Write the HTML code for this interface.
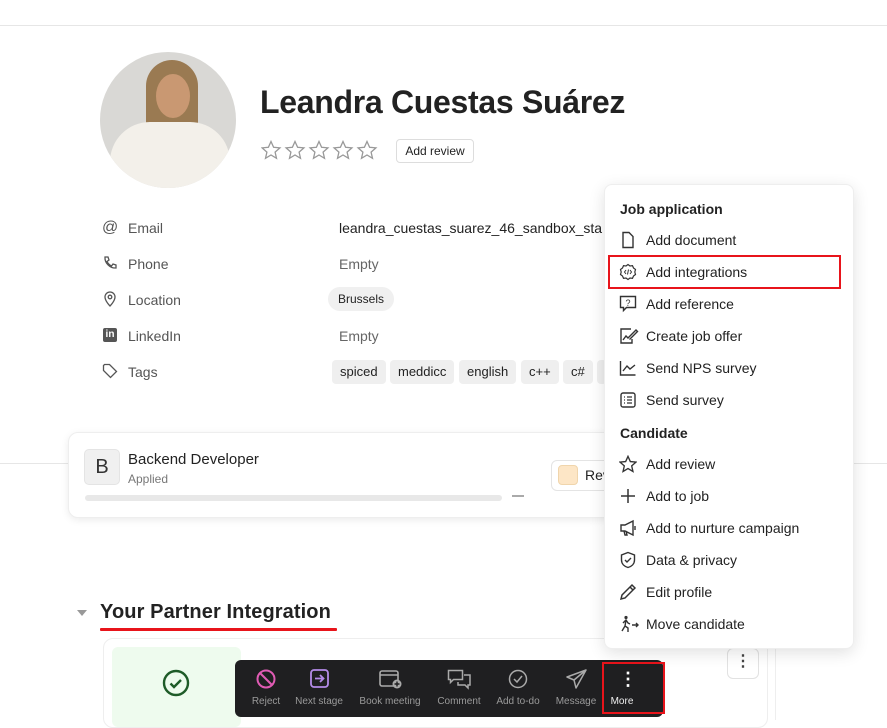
<!DOCTYPE html>
<html><head><meta charset="utf-8"><style>
*{box-sizing:border-box;margin:0;padding:0}
body{width:887px;height:720px;overflow:hidden;background:#fff;font-family:"Liberation Sans",sans-serif;color:#222;position:relative}
.a{position:absolute}
.lbl{position:absolute;left:128px;font-size:14px;color:#555}
.val{position:absolute;left:339px;font-size:14px;color:#666}
.ic{position:absolute;left:102px}
.tag{position:absolute;top:360px;height:24px;background:#efefef;border-radius:4px;font-size:13px;line-height:24px;padding:0 8px;color:#222}
.mi{position:absolute;left:646px;font-size:14px;color:#222}
.mic{position:absolute;left:619px}
.mh{position:absolute;left:620px;font-size:14px;font-weight:bold;color:#222}
.tb{position:absolute;top:696px;font-size:10px;color:#9a9a9a;transform:translateX(-50%);white-space:nowrap}
.ti{position:absolute;top:669px}
</style></head><body>
<div class="a" style="left:0;top:25px;width:887px;height:1px;background:#e6e6e6"></div>
<!-- avatar -->
<div class="a" style="left:100px;top:52px;width:136px;height:136px;border-radius:50%;overflow:hidden;background:#d9d8d5">
 <div class="a" style="left:46px;top:8px;width:52px;height:110px;border-radius:26px 26px 10px 10px;background:#9a7a52"></div>
 <div class="a" style="left:56px;top:22px;width:34px;height:44px;border-radius:50%;background:#c99872"></div>
 <div class="a" style="left:10px;top:70px;width:120px;height:80px;border-radius:40px 40px 0 0;background:#f3f0ea"></div>
</div>
<div class="a" style="left:260px;top:84px;font-size:32px;font-weight:bold;color:#222;letter-spacing:-0.3px">Leandra Cuestas Suárez</div>
<svg class="a" style="left:261px;top:140px" width="120" height="22" viewBox="0 0 120 22">
 <g fill="none" stroke="#999" stroke-width="1.3">
 <path id="s" d="M10 1.5l2.6 5.8 6.3.6-4.8 4.2 1.4 6.2L10 15l-5.5 3.3 1.4-6.2L1.1 7.9l6.3-.6z"/>
 <use href="#s" x="24"/><use href="#s" x="48"/><use href="#s" x="72"/><use href="#s" x="96"/></g></svg>
<div class="a" style="left:396px;top:139px;width:78px;height:24px;border:1px solid #ddd;border-radius:4px;font-size:12px;line-height:22px;text-align:center;color:#222">Add review</div>
<!-- rows -->
<div class="ic" style="top:219px;font-size:16px;color:#555">@</div>
<div class="lbl" style="top:220px">Email</div><div class="val" style="top:220px;color:#222">leandra_cuestas_suarez_46_sandbox_sta</div>
<svg class="ic" style="top:255px" width="16" height="16" viewBox="0 0 16 16"><path d="M3 2l3 0 1 3-2 1.5c1 2 2.5 3.5 4.5 4.5L11 9l3 1v3c-6 .5-11.5-5-11-11z" fill="none" stroke="#555" stroke-width="1.3"/></svg>
<div class="lbl" style="top:256px">Phone</div><div class="val" style="top:256px">Empty</div>
<svg class="ic" style="top:291px" width="16" height="16" viewBox="0 0 16 16"><path d="M8 15s5-5 5-9A5 5 0 0 0 3 6c0 4 5 9 5 9z" fill="none" stroke="#555" stroke-width="1.3"/><circle cx="8" cy="6" r="1.8" fill="none" stroke="#555" stroke-width="1.3"/></svg>
<div class="lbl" style="top:292px">Location</div>
<div class="a" style="left:328px;top:287px;width:66px;height:24px;background:#f0f0f0;border-radius:12px;font-size:12px;line-height:24px;text-align:center;color:#222">Brussels</div>
<div class="ic" style="top:328px;left:103px;width:14px;height:14px;background:#555;border-radius:2px;color:#fff;font-size:10px;font-weight:bold;line-height:14px;text-align:center">in</div>
<div class="lbl" style="top:328px">LinkedIn</div><div class="val" style="top:328px">Empty</div>
<svg class="ic" style="top:363px" width="16" height="16" viewBox="0 0 16 16"><path d="M1.5 2.5v5l7 7 6-6-7-7h-5z" fill="none" stroke="#555" stroke-width="1.3"/></svg>
<div class="lbl" style="top:364px">Tags</div>
<div class="tag" style="left:332px">spiced</div>
<div class="tag" style="left:390px">meddicc</div>
<div class="tag" style="left:459px">english</div>
<div class="tag" style="left:521px">c++</div>
<div class="tag" style="left:563px">c#</div>
<div class="tag" style="left:597px;width:10px;padding:0"></div>
<!-- divider -->
<div class="a" style="left:0;top:463px;width:887px;height:1px;background:#e6e6e6"></div>
<!-- job card -->
<div class="a" style="left:68px;top:432px;width:600px;height:86px;background:#fff;border:1px solid #eee;border-radius:10px;box-shadow:0 2px 8px rgba(0,0,0,.08)"></div>
<div class="a" style="left:84px;top:449px;width:36px;height:36px;background:#f0f0f0;border:1px solid #e4e4e4;border-radius:5px;font-size:20px;line-height:34px;text-align:center;color:#333">B</div>
<div class="a" style="left:128px;top:451px;font-size:15px;color:#222">Backend Developer</div>
<div class="a" style="left:128px;top:472px;font-size:12px;color:#777">Applied</div>
<div class="a" style="left:85px;top:495px;width:417px;height:6px;background:#e8e8e8;border-radius:3px"></div>
<div class="a" style="left:512px;top:495px;width:12px;height:1.5px;background:#aaa"></div>
<div class="a" style="left:551px;top:460px;width:70px;height:31px;border:1px solid #e4e4e4;border-radius:6px;background:#fff"></div>
<div class="a" style="left:558px;top:465px;width:20px;height:20px;background:#fde6c6;border:1px solid #f0d5ac;border-radius:4px"></div>
<div class="a" style="left:585px;top:467px;font-size:14px;color:#222">Rev</div>
<!-- section -->
<div class="a" style="left:77px;top:610px;width:0;height:0;border-left:5px solid transparent;border-right:5px solid transparent;border-top:6px solid #999"></div>
<div class="a" style="left:100px;top:601px;font-size:20px;font-weight:bold;color:#222;letter-spacing:0.1px">Your Partner Integration</div>
<div class="a" style="left:100px;top:628px;width:237px;height:3px;background:#e8141b;border-radius:1px"></div>
<div class="a" style="left:103px;top:638px;width:665px;height:90px;border:1px solid #eee;border-radius:10px;background:#fff"></div>
<div class="a" style="left:112px;top:647px;width:129px;height:80px;background:#eefbee;border-radius:6px"></div>
<svg class="a" style="left:162px;top:669px" width="28" height="28" viewBox="0 0 28 28"><circle cx="14" cy="14" r="12" fill="none" stroke="#1e5b28" stroke-width="2.4"/><path d="M8.5 14.5l3.5 3.5 7-7" fill="none" stroke="#1e5b28" stroke-width="2.4"/></svg>
<div class="a" style="left:727px;top:648px;width:32px;height:31px;border:1px solid #e2e2e2;border-radius:6px;background:#fff;text-align:center;font-size:16px;line-height:26px;color:#444;font-weight:bold">⋮</div>
<div class="a" style="left:775px;top:640px;width:1px;height:80px;background:#eee"></div>
<!-- toolbar -->
<div class="a" style="left:235px;top:660px;width:428px;height:57px;background:#1f1f21;border-radius:6px"></div>
<svg class="ti" style="left:256px" width="20" height="20" viewBox="0 0 20 20"><circle cx="10" cy="10" r="8.5" fill="none" stroke="#e05bb4" stroke-width="2"/><path d="M4 4l12 12" stroke="#e05bb4" stroke-width="2"/></svg>
<div class="tb" style="left:266px">Reject</div>
<svg class="ti" style="left:310px" width="19" height="19" viewBox="0 0 19 19"><rect x="1" y="1" width="17" height="17" rx="3" fill="none" stroke="#b48be8" stroke-width="1.8"/><path d="M5 9.5h8M10 6l3.5 3.5L10 13" fill="none" stroke="#b48be8" stroke-width="1.8"/></svg>
<div class="tb" style="left:319px">Next stage</div>
<svg class="ti" style="left:379px" width="24" height="20" viewBox="0 0 24 20"><rect x="1" y="2" width="18" height="15" rx="2" fill="none" stroke="#aaa" stroke-width="1.6"/><path d="M1 6h18" stroke="#aaa" stroke-width="1.6"/><circle cx="18" cy="15" r="4.5" fill="#aaa"/><path d="M18 12.5v5M15.5 15h5" stroke="#1f1f21" stroke-width="1.4"/></svg>
<div class="tb" style="left:390px">Book meeting</div>
<svg class="ti" style="left:447px" width="25" height="22" viewBox="0 0 25 22"><path d="M1.5 1.5h14v9h-9l-3 3v-3h-2z" fill="none" stroke="#aaa" stroke-width="1.5"/><path d="M17 6h6v10h-2v3l-3-3h-7v-3" fill="none" stroke="#aaa" stroke-width="1.5"/></svg>
<div class="tb" style="left:459px">Comment</div>
<svg class="ti" style="left:508px" width="20" height="20" viewBox="0 0 20 20"><circle cx="10" cy="10" r="8.5" fill="none" stroke="#aaa" stroke-width="1.5"/><path d="M6 10l3 3 5-6" fill="none" stroke="#aaa" stroke-width="1.5"/></svg>
<div class="tb" style="left:518px">Add to-do</div>
<svg class="ti" style="left:566px" width="21" height="20" viewBox="0 0 21 20"><path d="M20 1L1 8l7 3 2 8z M20 1L8 11" fill="none" stroke="#aaa" stroke-width="1.5" stroke-linejoin="round"/></svg>
<div class="tb" style="left:576px">Message</div>
<div class="a" style="left:602px;top:662px;width:63px;height:52px;border:2px solid #e8141b"></div>
<div class="a" style="left:619px;top:669px;font-size:18px;color:#fff;font-weight:bold;line-height:20px">⋮</div>
<div class="tb" style="left:622px;color:#eee">More</div>
<!-- menu -->
<div class="a" style="left:604px;top:184px;width:250px;height:465px;background:#fff;border:1px solid #eee;border-radius:8px;box-shadow:0 4px 16px rgba(0,0,0,.12)"></div>
<div class="mh" style="top:201px">Job application</div>
<svg class="mic" style="top:231px" width="18" height="18" viewBox="0 0 18 18"><path d="M4 1.5h6l4 4v11H4z" fill="none" stroke="#333" stroke-width="1.4"/></svg>
<div class="mi" style="top:232px">Add document</div>
<svg class="mic" style="top:263px" width="18" height="18" viewBox="0 0 18 18"><path d="M9 1.5l2 1.5 2.5-.3 1 2.3 2 1.5-.7 2.5.7 2.5-2 1.5-1 2.3-2.5-.3-2 1.5-2-1.5-2.5.3-1-2.3-2-1.5.7-2.5-.7-2.5 2-1.5 1-2.3 2.5.3z" fill="none" stroke="#333" stroke-width="1.2"/><path d="M7 7l-1.5 2L7 11M11 7l1.5 2L11 11M9.5 6.5l-1 5" fill="none" stroke="#333" stroke-width="1"/></svg>
<div class="mi" style="top:264px">Add integrations</div>
<div class="a" style="left:608px;top:255px;width:233px;height:34px;border:2px solid #e8141b"></div>
<svg class="mic" style="top:295px" width="18" height="18" viewBox="0 0 18 18"><path d="M1.5 1.5h15v11h-9l-3 3v-3h-3z" fill="none" stroke="#333" stroke-width="1.4"/><text x="9" y="11" font-size="9" text-anchor="middle" fill="#333" font-family="Liberation Sans">?</text></svg>
<div class="mi" style="top:296px">Add reference</div>
<svg class="mic" style="top:327px" width="20" height="18" viewBox="0 0 20 18"><path d="M12 2H2v14h11v-4" fill="none" stroke="#333" stroke-width="1.4"/><path d="M4 13l3-4 2 2 8-8 1.5 1.5-8 8" fill="none" stroke="#333" stroke-width="1.4"/></svg>
<div class="mi" style="top:328px">Create job offer</div>
<svg class="mic" style="top:359px" width="18" height="18" viewBox="0 0 18 18"><path d="M1.5 2v14h15M4 12l4-5 3 3 5-4" fill="none" stroke="#333" stroke-width="1.4"/></svg>
<div class="mi" style="top:360px">Send NPS survey</div>
<svg class="mic" style="top:391px" width="18" height="18" viewBox="0 0 18 18"><rect x="2" y="2" width="14" height="14" rx="2" fill="none" stroke="#333" stroke-width="1.4"/><path d="M5 6h1M8 6h5M5 9h1M8 9h5M5 12h1M8 12h5" stroke="#333" stroke-width="1.3"/></svg>
<div class="mi" style="top:392px">Send survey</div>
<div class="mh" style="top:425px">Candidate</div>
<svg class="mic" style="top:455px" width="18" height="18" viewBox="0 0 20 20"><path d="M10 1.5l2.6 5.8 6.3.6-4.8 4.2 1.4 6.2L10 15l-5.5 3.3 1.4-6.2L1.1 7.9l6.3-.6z" fill="none" stroke="#333" stroke-width="1.5"/></svg>
<div class="mi" style="top:456px">Add review</div>
<svg class="mic" style="top:487px" width="18" height="18" viewBox="0 0 18 18"><path d="M9 2v14M2 9h14" stroke="#333" stroke-width="1.5"/></svg>
<div class="mi" style="top:488px">Add to job</div>
<svg class="mic" style="top:519px" width="18" height="18" viewBox="0 0 18 18"><path d="M2 6h4l8-4v14l-8-4H2zM5 12l1 4h2l-1-4M16 7v4" fill="none" stroke="#333" stroke-width="1.4"/></svg>
<div class="mi" style="top:520px">Add to nurture campaign</div>
<svg class="mic" style="top:551px" width="18" height="18" viewBox="0 0 18 18"><path d="M9 1.5l6.5 2.5v5c0 4-3 6.5-6.5 7.5C5.5 15.5 2.5 13 2.5 9V4z" fill="none" stroke="#333" stroke-width="1.4"/><path d="M6 9l2 2 4-4" fill="none" stroke="#333" stroke-width="1.4"/></svg>
<div class="mi" style="top:552px">Data &amp; privacy</div>
<svg class="mic" style="top:583px" width="18" height="18" viewBox="0 0 18 18"><path d="M2 16l1-4L13 2l3 3L6 15z M11 4l3 3" fill="none" stroke="#333" stroke-width="1.5"/></svg>
<div class="mi" style="top:584px">Edit profile</div>
<svg class="mic" style="top:615px" width="20" height="18" viewBox="0 0 20 18"><circle cx="7" cy="2.5" r="1.6" fill="#333"/><path d="M4 8l3-3 2 3 2 1M7 5l-1 6-3 5M6 11l3 2v4M13 10h6M17 8l2 2-2 2" fill="none" stroke="#333" stroke-width="1.4"/></svg>
<div class="mi" style="top:616px">Move candidate</div>
</body></html>
